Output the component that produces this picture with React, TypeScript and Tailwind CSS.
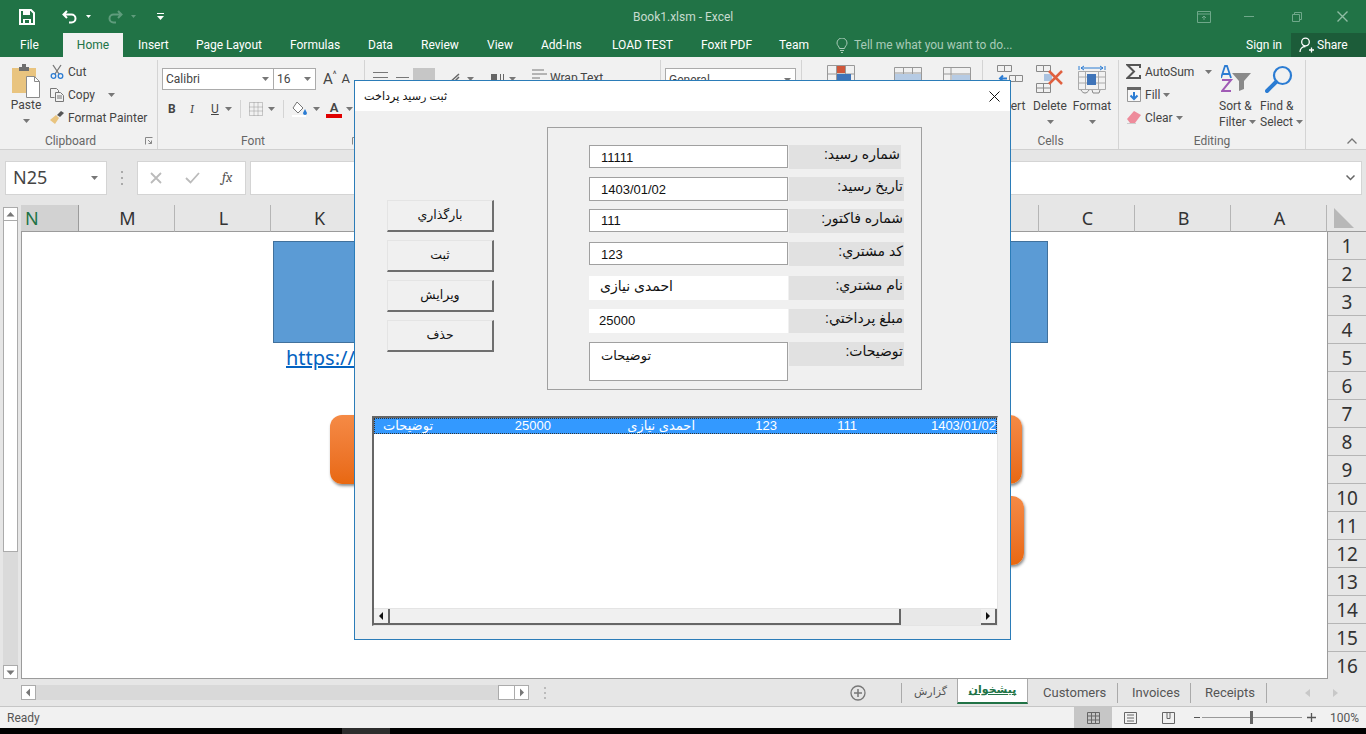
/**
 * Excel window with the payment receipt form open on top of it
 */
import React from "react";

const Caret = ({ className = "" }: { className?: string }) => (
  <svg width="7" height="4" viewBox="0 0 7 4" className={className}>
    <path d="M0 0h7L3.5 4z" fill="#777" />
  </svg>
);

const tabs = [
  { label: "Insert", cls: "ml-[15px] w-[29px]" },
  { label: "Page Layout", cls: "ml-[29px] w-[65px]" },
  { label: "Formulas", cls: "ml-[29px] w-[49px]" },
  { label: "Data", cls: "ml-[29px] w-[24px]" },
  { label: "Review", cls: "ml-[29px] w-[37px]" },
  { label: "View", cls: "ml-[29px] w-[25px]" },
  { label: "Add-Ins", cls: "ml-[29px] w-[42px]" },
  { label: "LOAD TEST", cls: "ml-[29px] w-[60px]" },
  { label: "Foxit PDF", cls: "ml-[29px] w-[50px]" },
  { label: "Team", cls: "ml-[28px] w-[29px]" },
];

/* ---------- title bar and tabs ---------- */
const TitleBar = () => (
  <div className="relative flex h-[33px] items-center bg-[#217346] text-white">
    <svg width="16" height="16" viewBox="0 0 16 16" className="ml-[19px]">
      <path d="M1 1h11l3 3v11H1z" fill="none" stroke="#fff" strokeWidth="2" />
      <path d="M4 2h7v4H4zM4 10h8v5H4z" fill="#fff" />
      <path d="M6 11h4v3H6z" fill="#217346" />
    </svg>
    <svg width="16" height="14" viewBox="0 0 16 14" className="ml-[27px]">
      <path d="M5 1L1.5 4.5 5 8M2 4.5h7.5a4 4 0 0 1 0 8H7" fill="none" stroke="#fff" strokeWidth="2" />
    </svg>
    <svg width="5" height="3" viewBox="0 0 5 3" className="ml-[8px]"><path d="M0 0h5L2.5 3z" fill="#fff" /></svg>
    <svg width="16" height="14" viewBox="0 0 16 14" className="ml-[16px]">
      <path d="M11 1l3.5 3.5L11 8M14 4.5H6.5a4 4 0 0 0 0 8H9" fill="none" stroke="#5f9c7c" strokeWidth="2" />
    </svg>
    <svg width="5" height="3" viewBox="0 0 5 3" className="ml-[8px]"><path d="M0 0h5L2.5 3z" fill="#5f9c7c" /></svg>
    <svg width="7" height="8" viewBox="0 0 7 8" className="ml-[21px]">
      <path d="M0 0h7v1H0zM0 3h7L3.5 7z" fill="#fff" />
    </svg>
    <span className="ml-[469px] mt-[1px] text-[12px] text-[#c7dccf]">Book1.xlsm - Excel</span>
    <div className="ml-auto flex items-center">
      <svg width="14" height="12" viewBox="0 0 14 12">
        <path d="M.5.5h13v11H.5zM.5 3h13M7 9V5M5 7l2-2 2 2" fill="none" stroke="#6fa88a" />
      </svg>
      <div className="ml-[33px] h-[1px] w-[10px] bg-[#6fa88a]" />
      <svg width="10" height="10" viewBox="0 0 10 10" className="ml-[38px]">
        <path d="M.5 2.5h7v7h-7zM2.5 2.5v-2h7v7h-2" fill="none" stroke="#6fa88a" />
      </svg>
      <svg width="11" height="11" viewBox="0 0 11 11" className="ml-[35px] mr-[18px]">
        <path d="M.5.5l10 10M10.5.5l-10 10" stroke="#8fbca3" strokeWidth="1.4" />
      </svg>
    </div>
  </div>
);

const TabBar = () => (
  <div className="flex h-[24px] items-center bg-[#217346] text-[12px] text-white">
    <span className="ml-[20px] w-[18px]">File</span>
    <span className="ml-[25px] flex h-full w-[60px] items-center justify-center bg-[#f1f1f1] text-[#217346]">Home</span>
    {tabs.map((t) => (
      <span key={t.label} className={`whitespace-nowrap ${t.cls}`}>{t.label}</span>
    ))}
    <svg width="12" height="15" viewBox="0 0 12 15" className="ml-[28px]">
      <path d="M3.5 10.5C3 8 1 7.500 1 5a5 5 0 0 1 10 0c0 2.500-2 3-2.500 5.500zM4 12.500h4M5 14.500h2" fill="none" stroke="#a9cbb8" />
    </svg>
    <span className="ml-[6px] text-[#a9cbb8]">Tell me what you want to do...</span>
    <span className="ml-auto">Sign in</span>
    <div className="ml-[9px] flex h-full w-[75px] items-center bg-[#1c5c39]">
      <svg width="15" height="16" viewBox="0 0 15 16" className="ml-[8px]">
        <circle cx="6.500" cy="5" r="3.800" fill="none" stroke="#fff" strokeWidth="1.300" />
        <path d="M1 15c0-3 2-5.500 5.500-5.500M10 13h5M12.500 10.500v5" fill="none" stroke="#fff" strokeWidth="1.300" />
      </svg>
      <span className="ml-[3px]">Share</span>
    </div>
  </div>
);

/* ---------- ribbon ---------- */
const Group = ({ label, className, launcher, children }: { label: string; className: string; launcher?: boolean; children: React.ReactNode }) => (
  <div className={`flex h-[89px] flex-col border-r border-[#d4d4d4] ${className}`}>
    <div className="-mt-[3px] h-[76px] overflow-hidden">{children}</div>
    <div className="flex items-center text-[12px] leading-[16px] text-[#666]">
      <div className="flex-1 text-center">{label}</div>
      {launcher && (
        <div className="flex w-[16px] justify-center">
          <svg width="8" height="8" viewBox="0 0 8 8">
            <path d="M.5 7.500v-7h7M3 3l3.500 3.500M6.500 3.500v3h-3" fill="none" stroke="#888" />
          </svg>
        </div>
      )}
    </div>
  </div>
);

const PasteIcon = () => (
  <svg width="30" height="34" viewBox="0 0 30 34">
    <path d="M1 4h24v25H1z" fill="#e9c47f" />
    <path d="M8 3h3V0h4v3h3v4H8z" fill="#6e6e6e" />
    <path d="M15.500 12.500h8l5 5v16h-13z" fill="#fff" stroke="#8a8a8a" />
    <path d="M23.500 12.500v5h5" fill="none" stroke="#8a8a8a" />
  </svg>
);

const ClipboardGroup = () => (
  <Group label="Clipboard" className="w-[158px]" launcher>
    <div className="flex">
      <div className="ml-[11px] flex w-[30px] flex-col items-center pt-[7px]">
        <PasteIcon />
        <span className="-mt-[1px] text-[12px] leading-[16px] text-[#444]">Paste</span>
        <Caret className="mt-[6px]" />
      </div>
      <div className="ml-[9px] flex flex-col whitespace-nowrap text-[12px] text-[#444]">
        <div className="mt-[3px] flex h-[23px] items-center gap-[4px]">
          <svg width="14" height="15" viewBox="0 0 14 15">
            <path d="M3 1l6 9M11 1L5 10" stroke="#777" strokeWidth="1.300" />
            <circle cx="3.500" cy="12" r="2.300" fill="none" stroke="#2b7cd3" strokeWidth="1.300" />
            <circle cx="10.500" cy="12" r="2.300" fill="none" stroke="#2b7cd3" strokeWidth="1.300" />
          </svg>
          Cut
        </div>
        <div className="flex h-[23px] items-center gap-[4px]">
          <svg width="14" height="14" viewBox="0 0 14 14">
            <path d="M.5.5h6l2 2v2M.5.500v9h4M5.500 4.500h5l3 3v6h-8zM7 8h5M7 10h5" fill="none" stroke="#777" />
          </svg>
          Copy
          <Caret className="ml-[9px]" />
        </div>
        <div className="flex h-[23px] items-center gap-[4px]">
          <svg width="14" height="13" viewBox="0 0 14 13">
            <path d="M0 9l6-5 3 3-4 6z" fill="#e9c47f" />
            <path d="M7 4l4-4 3 2-4 4z" fill="#555" />
          </svg>
          Format Painter
        </div>
      </div>
    </div>
  </Group>
);

const FontGroup = () => (
  <Group label="Font" className="w-[207px]" launcher>
    <div className="pt-[11px] text-[12px] text-[#444]">
      <div className="flex h-[22px] items-center">
        <div className="ml-[4px] flex h-[22px] w-[112px] items-center justify-between border border-[#ababab] bg-white pl-[3px] pr-[4px]">
          Calibri <Caret />
        </div>
        <div className="ml-[-1px] flex h-[22px] w-[43px] items-center justify-between border border-[#ababab] bg-white pl-[3px] pr-[4px]">
          16 <Caret />
        </div>
        <span className="ml-[7px] text-[15px]">A</span>
        <span className="mb-[8px] text-[9px]">^</span>
        <span className="ml-[5px] text-[13px]">A</span>
      </div>
      <div className="mt-[8px] flex h-[22px] items-center">
        <span className="ml-[10px] w-[10px] font-bold">B</span>
        <span className="ml-[12px] w-[8px] font-serif italic">I</span>
        <span className="ml-[13px] w-[10px] underline">U</span>
        <Caret className="ml-[4px]" />
        <div className="ml-[8px] h-[18px] w-[1px] bg-[#d4d4d4]" />
        <svg width="14" height="14" viewBox="0 0 14 14" className="ml-[8px]">
          <path d="M.5.5h13v13H.5zM5 .5v13M9 .5v13M.5 5h13M.5 9h13" fill="none" stroke="#999" strokeDasharray="1 1" />
        </svg>
        <Caret className="ml-[5px]" />
        <div className="ml-[8px] h-[18px] w-[1px] bg-[#d4d4d4]" />
        <svg width="16" height="16" viewBox="0 0 16 16" className="ml-[8px]">
          <path d="M5 1l6 6-5 5-5-5z" fill="#fff" stroke="#777" />
          <path d="M13 8l2 4a2 2 0 0 1-4 0z" fill="#2b7cd3" />
          <path d="M0 14h14v2H0z" fill="#fff" />
        </svg>
        <Caret className="ml-[5px]" />
        <div className="ml-[6px] flex w-[16px] flex-col items-center">
          <span className="text-[13px] font-semibold leading-[13px]">A</span>
          <div className="h-[4px] w-[16px] bg-[#e00000]" />
        </div>
        <Caret className="ml-[4px]" />
      </div>
    </div>
  </Group>
);

/* mostly hidden by the form, only the top edge shows */
const AlignmentGroup = () => (
  <Group label="Alignment" className="w-[296px]">
    <div className="flex pt-[11px]">
      <svg width="15" height="11" viewBox="0 0 15 11" className="ml-[8px] mt-[4px]">
        <path d="M0 .5h15M0 5.500h15M0 10.500h15" stroke="#777" />
      </svg>
      <svg width="13" height="11" viewBox="0 0 13 11" className="ml-[8px] mt-[9px]">
        <path d="M0 .5h13M0 5.500h13" stroke="#777" />
      </svg>
      <div className="ml-[4px] h-[24px] w-[22px] bg-[#c6c6c6]" />
      <svg width="16" height="14" viewBox="0 0 16 14" className="ml-[12px] mt-[3px]">
        <path d="M1 13L12 3M5 13l7-7" stroke="#666" strokeWidth="1.500" fill="none" />
      </svg>
      <Caret className="ml-[4px] mt-[9px]" />
      <svg width="13" height="11" viewBox="0 0 13 11" className="ml-[17px] mt-[6px]">
        <path d="M0 0h6v7H0zM9 0h1v11H9zM12 0h1v11h-1z" fill="#666" />
      </svg>
      <Caret className="ml-[5px] mt-[9px]" />
      <svg width="15" height="14" viewBox="0 0 15 14" className="ml-[16px] mt-[1px]">
        <path d="M0 1h12M0 5h15M0 9h8M0 13h8" stroke="#777" fill="none" />
      </svg>
      <span className="ml-[3px] mt-[2px] text-[12px] leading-[16px] text-[#444]">Wrap Text</span>
    </div>
  </Group>
);

const NumberGroup = () => (
  <Group label="Number" className="w-[141px]">
    <div className="pt-[11px]">
      <div className="ml-[4px] flex h-[24px] w-[131px] items-center justify-between border border-[#ababab] bg-white pl-[3px] pr-[4px] text-[12px] text-[#444]">
        General <Caret />
      </div>
    </div>
  </Group>
);

const StylesGroup = () => (
  <Group label="Styles" className="w-[181px]">
    <div className="flex pt-[8px]">
      <svg width="28" height="28" viewBox="0 0 28 28" className="ml-[25px]">
        <path d="M.5.5h27v27H.5zM.5 9h27M.5 18h27M9.500.5v27M18.500.5v27" fill="none" stroke="#999" />
        <path d="M10 1h8v7h-8z" fill="#d0573a" /><path d="M10 9h14v8H10z" fill="#3f74b8" /><path d="M10 18h8v9h-8z" fill="#d0573a" />
      </svg>
      <svg width="28" height="24" viewBox="0 0 28 24" className="ml-[39px] mt-[2px]">
        <path d="M.5.5h27v23H.5zM.5 6h27M9.500.5v23M18.500.5v23" fill="none" stroke="#999" />
        <path d="M1 7h26v6H1z" fill="#b6cbe4" />
      </svg>
      <svg width="28" height="24" viewBox="0 0 28 24" className="ml-[21px] mt-[2px]">
        <path d="M.5.5h27v23H.5zM8 .5v23M.5 7h27" fill="none" stroke="#999" />
        <path d="M9 8h18v15H9z" fill="#b6cbe4" />
      </svg>
    </div>
  </Group>
);

const CellsGroup = () => (
  <Group label="Cells" className="w-[136px]">
    <div className="flex">
      <div className="ml-[12px] flex w-[30px] flex-col items-center">
        <svg width="26" height="28" viewBox="0 0 26 28" className="mt-[8px]">
          <path d="M.5.5h7v6h-7zM7.500.5h7v6h-7zM12.500 10.500h6v6h-6zM18.500 10.500h7v6h-7z" fill="none" stroke="#888" />
          <path d="M10 13.500H3M6 10.500l-3 3 3 3" stroke="#2b7cd3" strokeWidth="2" fill="none" />
        </svg>
        <span className="mt-[5px] text-[12px] leading-[16px] text-[#444]">Insert</span>
      </div>
      <div className="ml-[8px] flex w-[34px] flex-col items-center">
        <svg width="28" height="28" viewBox="0 0 28 28" className="mt-[8px]">
          <path d="M.5.5h7v6h-7zM7.500.5h7v6h-7zM.5 18.500h14v9H.5zM7.500 18.500v9M.5 23h14" fill="none" stroke="#888" />
          <path d="M8 9h8v7H8z" fill="#a9c2e0" />
          <path d="M13 6l13 13M26 6L13 19" stroke="#e0603f" strokeWidth="2.500" />
        </svg>
        <span className="mt-[5px] text-[12px] leading-[16px] text-[#444]">Delete</span>
        <Caret className="mt-[6px]" />
      </div>
      <div className="ml-[7px] flex w-[36px] flex-col items-center">
        <svg width="28" height="30" viewBox="0 0 28 30" className="mt-[8px]">
          <path d="M1 1v4M27 1v4M3 3h22M3 3l3-2M3 3l3 2M25 3l-3-2M25 3l-3 2" stroke="#2b7cd3" fill="none" />
          <path d="M.5 6.500h27v18H.5zM7.500 6.500v18M20.500 6.500v18M.5 12h27M.5 18h27" fill="none" stroke="#aaa" />
          <path d="M9 9h9v11H9z" fill="#3f74b8" />
          <path d="M3 25c2 4 6 4 8 0M14 25l1 3h6l1-3" fill="none" stroke="#888" />
        </svg>
        <span className="mt-[3px] text-[12px] leading-[16px] text-[#444]">Format</span>
        <Caret className="mt-[6px]" />
      </div>
    </div>
  </Group>
);

const EditingGroup = () => (
  <Group label="Editing" className="w-[187px]">
    <div className="flex text-[12px] text-[#444]">
      <div className="ml-[7px] flex w-[93px] flex-col">
        <div className="mt-[3px] flex h-[23px] items-center">
          <svg width="15" height="15" viewBox="0 0 15 15" className="mr-[4px]">
            <path d="M14 4V1H1.500L8 7.500 1.500 14H14v-3" fill="none" stroke="#555" strokeWidth="2" />
          </svg>
          AutoSum
          <Caret className="ml-[11px]" />
        </div>
        <div className="flex h-[23px] items-center">
          <svg width="14" height="15" viewBox="0 0 14 15" className="ml-[1px] mr-[4px]">
            <path d="M.5.5h13v14H.5z" fill="#f8f8f8" stroke="#999" />
            <path d="M0 0h14v3H0z" fill="#666" />
            <path d="M7 5v7M3.500 8.500L7 12l3.500-3.500" stroke="#2b7cd3" strokeWidth="2" fill="none" />
          </svg>
          Fill
          <Caret className="ml-[3px]" />
        </div>
        <div className="flex h-[23px] items-center">
          <svg width="14" height="13" viewBox="0 0 14 13" className="ml-[1px] mr-[4px]">
            <path d="M0 8l7-8 7 4-6 8H3z" fill="#ee8b9b" />
            <path d="M0 12h9v1H0z" fill="#ccc" />
          </svg>
          Clear
          <Caret className="ml-[3px]" />
        </div>
      </div>
      <div className="flex w-[40px] flex-col items-start">
        <svg width="30" height="28" viewBox="0 0 30 28" className="ml-[2px] mt-[8px]">
          <path d="M0 13L4 1h2l4 12M2 9h6" fill="none" stroke="#2b7cd3" strokeWidth="1.800" />
          <path d="M1 15h9L1 26h9" fill="none" stroke="#a05bb5" strokeWidth="2" />
          <path d="M11 8h19l-7 8v8l-5 2V16z" fill="#8a8a8a" />
        </svg>
        <span className="mt-[5px] whitespace-nowrap leading-[16px]">Sort &amp;</span>
        <span className="flex items-center leading-[16px]">Filter<Caret className="ml-[3px]" /></span>
      </div>
      <div className="ml-[1px] flex w-[40px] flex-col items-start">
        <svg width="28" height="28" viewBox="0 0 28 28" className="ml-[5px] mt-[8px]">
          <circle cx="17.500" cy="10.500" r="8.500" fill="none" stroke="#2b7cd3" strokeWidth="2.200" />
          <path d="M11 17L2 26" stroke="#2b7cd3" strokeWidth="4" strokeLinecap="round" />
        </svg>
        <span className="mt-[5px] whitespace-nowrap leading-[16px]">Find &amp;</span>
        <span className="flex items-center leading-[16px]">Select<Caret className="ml-[3px]" /></span>
      </div>
    </div>
  </Group>
);

const Ribbon = () => (
  <div className="relative flex h-[93px] items-start border-b border-[#d0d0d0] bg-[#f1f1f1] pt-[3px]">
    <ClipboardGroup />
    <FontGroup />
    <AlignmentGroup />
    <NumberGroup />
    <StylesGroup />
    <CellsGroup />
    <EditingGroup />
    <svg width="10" height="6" viewBox="0 0 10 6" className="ml-[41px] mt-[78px]">
      <path d="M.5 5.500L5 1l4.500 4.500" fill="none" stroke="#777" strokeWidth="1.300" />
    </svg>
  </div>
);

const FormulaBar = () => (
  <div className="flex h-[55px] items-center bg-[#e6e6e6] font-['Noto_Sans',sans-serif]">
    <div className="ml-[5px] flex h-[34px] w-[102px] items-center justify-between border border-[#d4d4d4] bg-white pl-[7px] pr-[8px] text-[18px] text-[#444]">
      N25 <Caret />
    </div>
    <div className="ml-[14px] flex h-[14px] w-[2px] flex-col justify-between">
      <div className="h-[2px] bg-[#aaa]" /><div className="h-[2px] bg-[#aaa]" /><div className="h-[2px] bg-[#aaa]" />
    </div>
    <div className="ml-[14px] flex h-[34px] w-[109px] items-center border border-[#d4d4d4] bg-white">
      <svg width="12" height="12" viewBox="0 0 12 12" className="ml-[12px]">
        <path d="M1 1l10 10M11 1L1 11" stroke="#bbb" strokeWidth="1.800" />
      </svg>
      <svg width="15" height="12" viewBox="0 0 15 12" className="ml-[23px]">
        <path d="M1 6l4.500 4.500L14 1" fill="none" stroke="#bbb" strokeWidth="1.800" />
      </svg>
      <span className="ml-[22px] font-serif text-[14px] italic text-[#555]">fx</span>
    </div>
    <div className="ml-[4px] mr-[4px] flex h-[34px] flex-1 items-center justify-end border border-[#d4d4d4] bg-white pr-[6px]">
      <svg width="9" height="6" viewBox="0 0 9 6"><path d="M.5.5L4.500 4.500 8.500.5" fill="none" stroke="#666" strokeWidth="1.500" /></svg>
    </div>
  </div>
);

/* ---------- sheet ---------- */
const columns = ["M", "L", "K", "J", "I", "H", "G", "F", "E", "D", "C", "B", "A"];
const rows = Array.from({ length: 16 }, (_, i) => i + 1);

const ArrowBox = ({ d, className = "" }: { d: string; className?: string }) => (
  <div className={`flex items-center justify-center border border-[#ababab] bg-white ${className}`}>
    <svg width="9" height="9" viewBox="0 0 9 9"><path d={d} fill="#777" /></svg>
  </div>
);

const SheetArea = () => (
  <div className="flex h-[474px] bg-[#e6e6e6] font-['Noto_Sans',sans-serif]">
    <div className="flex w-[21px] flex-col pl-[3px] pt-[2px]">
      <ArrowBox d="M4.500 2L8.500 6.500H.5z" className="h-[14px] w-[15px]" />
      <div className="h-[331px] w-[15px] border border-t-0 border-[#ababab] bg-white" />
      <div className="h-[113px] w-[15px] bg-[#dadada]" />
      <ArrowBox d="M.5 2.500h8L4.500 7z" className="h-[14px] w-[15px]" />
    </div>
    <div className="flex w-[1306px] flex-col">
      <div className="flex h-[27px] text-[18px] leading-[26px] text-[#333]">
        <div className="w-[58px] border-b border-r border-[#9b9b9b] bg-[#d2d2d2] pl-[4px] text-[#217346]">N</div>
        {columns.map((c) => (
          <div key={c} className="w-[96px] border-b border-r border-[#b5b5b5] border-b-[#9b9b9b] pl-[2px] text-center">{c}</div>
        ))}
      </div>
      <div className="relative h-[447px] overflow-hidden border-b border-l border-[#9b9b9b] bg-white">
        <div className="absolute left-[251px] top-[9px] h-[102px] w-[775px] border border-[#41719c] bg-[#5b9bd5]" />
        <span className="absolute left-[264px] top-[111px] text-[20px] text-[#0563c1] underline">https://</span>
        <div className="absolute left-[308px] top-[183px] h-[69px] w-[692px] rounded-[12px] bg-gradient-to-b from-[#f58a45] to-[#e8680f] shadow-[1px_2px_3px_rgba(0,0,0,0.45)]" />
        <div className="absolute left-[360px] top-[264px] h-[69px] w-[642px] rounded-[12px] bg-gradient-to-b from-[#f58a45] to-[#e8680f] shadow-[1px_2px_3px_rgba(0,0,0,0.45)]" />
      </div>
    </div>
    <div className="w-[39px]">
      <div className="flex h-[27px] items-center justify-center border-b border-[#9b9b9b]">
        <svg width="20" height="20" viewBox="0 0 20 20" className="ml-[-6px]"><path d="M20 20H0V0z" fill="#b8b8b8" /></svg>
      </div>
      <div className="h-[447px] overflow-hidden border-l border-[#9b9b9b]">
        {rows.map((r) => (
          <div key={r} className="h-[28px] border-b border-[#b5b5b5] text-center text-[19px] leading-[29px] text-[#333]">{r}</div>
        ))}
      </div>
    </div>
  </div>
);

const SheetTabs = () => (
  <div className="flex h-[27px] items-center bg-[#e6e6e6] text-[13px] text-[#555]">
    <ArrowBox d="M6 .5v8L2 4.500z" className="ml-[21px] h-[15px] w-[15px]" />
    <div className="h-[15px] w-[462px] bg-[#d9d9d9]" />
    <div className="h-[15px] w-[17px] border border-[#ababab] bg-white" />
    <ArrowBox d="M3 .5v8l4-4z" className="ml-[-1px] h-[15px] w-[15px]" />
    <div className="ml-[15px] flex h-[12px] w-[2px] flex-col justify-between">
      <div className="h-[2px] bg-[#bbb]" /><div className="h-[2px] bg-[#bbb]" /><div className="h-[2px] bg-[#bbb]" />
    </div>
    <svg width="16" height="16" viewBox="0 0 16 16" className="ml-[304px]">
      <circle cx="8" cy="8" r="7" fill="none" stroke="#777" strokeWidth="1.300" />
      <path d="M8 4v8M4 8h8" stroke="#777" strokeWidth="1.500" />
    </svg>
    <div className="ml-[35px] h-[20px] w-[1px] bg-[#aaa]" />
    <span dir="rtl" className="ml-[12px] w-[33px] font-['DejaVu_Sans',sans-serif] text-[11px]">گزارش</span>
    <div className="ml-[10px] flex h-[25px] w-[71px] items-center justify-center self-start border-x border-b-2 border-[#aaa] border-b-[#217346] bg-white font-['DejaVu_Sans',sans-serif] text-[11px] font-bold text-[#217346] underline" dir="rtl">
      پیشخوان
    </div>
    <span className="ml-[15px] w-[62px] whitespace-nowrap">Customers</span>
    <div className="ml-[12px] h-[20px] w-[1px] bg-[#aaa]" />
    <span className="ml-[14px] w-[46px] whitespace-nowrap">Invoices</span>
    <div className="ml-[12px] h-[20px] w-[1px] bg-[#aaa]" />
    <span className="ml-[14px] w-[49px] whitespace-nowrap">Receipts</span>
    <div className="ml-[12px] h-[20px] w-[1px] bg-[#aaa]" />
    <svg width="5" height="8" viewBox="0 0 5 8" className="ml-[38px]"><path d="M5 0v8L0 4z" fill="#c8c8c8" /></svg>
    <svg width="5" height="8" viewBox="0 0 5 8" className="ml-[23px]"><path d="M0 0v8l5-4z" fill="#c8c8c8" /></svg>
  </div>
);

const StatusBar = () => (
  <div className="flex h-[22px] items-center border-t border-[#c6c6c6] bg-[#f1f1f1] text-[12px] text-[#555]">
    <span className="ml-[7px] w-[31px]">Ready</span>
    <div className="ml-[1036px] flex h-full w-[38px] items-center justify-center bg-[#c6c6c6]">
      <svg width="13" height="12" viewBox="0 0 13 12"><path d="M.5.5h12v11H.5zM4.500.5v11M8.500.5v11M.5 4h12M.5 8h12" fill="none" stroke="#666" /></svg>
    </div>
    <svg width="13" height="12" viewBox="0 0 13 12" className="ml-[12px]"><path d="M.5.5h12v11H.5zM3 3h7M3 6h7M3 9h7" fill="none" stroke="#666" /></svg>
    <svg width="13" height="12" viewBox="0 0 13 12" className="ml-[25px]"><path d="M.5.5h12v11H.5zM5 .5v6h3v-6" fill="none" stroke="#666" /></svg>
    <div className="ml-[19px] h-[1px] w-[6px] bg-[#555]" />
    <div className="relative ml-[2px] h-[1px] w-[100px] bg-[#999]">
      <div className="absolute left-[48px] top-[-6px] h-[13px] w-[3px] bg-[#666]" />
    </div>
    <svg width="9" height="9" viewBox="0 0 9 9" className="ml-[5px]"><path d="M4.500 0v9M0 4.500h9" stroke="#555" strokeWidth="1.300" /></svg>
    <span className="ml-[14px]">100%</span>
  </div>
);

/* ---------- the form ---------- */
const formRows = [
  { label: "شماره رسيد:", value: "11111", cls: "mt-[17px]", inputCls: "h-[23px] border border-[#a0a0a0] pl-[11px] pt-[2px]", labelCls: "w-[112px]" },
  { label: "تاريخ رسيد:", value: "1403/01/02", cls: "mt-[8px]", inputCls: "h-[24px] border border-[#a0a0a0] pl-[11px] pt-[1px]", labelCls: "w-[115px]" },
  { label: "شماره فاكتور:", value: "111", cls: "mt-[8px]", inputCls: "h-[23px] border border-[#a0a0a0] pl-[11px] pt-[1px]", labelCls: "w-[115px]" },
  { label: "كد مشتري:", value: "123", cls: "mt-[9px]", inputCls: "h-[23px] border border-[#a0a0a0] pl-[11px] pt-[2px]", labelCls: "w-[115px]" },
  { label: "نام مشتري:", value: "احمدی نیازی", cls: "mt-[10px]", inputCls: "h-[24px] pb-[4px] pl-[11px] text-[14px]", labelCls: "w-[115px]" },
  { label: "مبلغ پرداختي:", value: "25000", cls: "mt-[9px]", inputCls: "h-[24px] pl-[10px]", labelCls: "w-[115px]" },
];

const buttons = ["بارگذاري", "ثبت", "ويرايش", "حذف"];

const listCells = [
  { text: "توضيحات", cls: "w-[59px]" },
  { text: "25000", cls: "w-[118px]" },
  { text: "احمدی نیازی", cls: "w-[144px]" },
  { text: "123", cls: "w-[82px]" },
  { text: "111", cls: "w-[80px]" },
  { text: "1403/01/02", cls: "w-[139px]" },
];

const FormLabel = ({ text, className = "w-[115px]" }: { text: string; className?: string }) => (
  <div dir="rtl" className={`ml-[1px] h-[24px] whitespace-nowrap bg-[#e1e1e1] pr-[1px] text-[14px] leading-[18px] ${className}`}>{text}</div>
);

const ReceiptForm = () => (
  <div className="absolute left-[354px] top-[80px] flex h-[560px] w-[657px] flex-col border border-[#2b7cb8] bg-[#f0f0f0] font-['Liberation_Sans','DejaVu_Sans',sans-serif] text-[13px] text-[#111]">
    <div className="flex h-[30px] shrink-0 items-center justify-between bg-white pl-[9px] pr-[10px]">
      <span dir="rtl" className="text-[11.2px]">ثبت رسيد پرداخت</span>
      <svg width="11" height="11" viewBox="0 0 11 11"><path d="M.5.5l10 10M10.500.5l-10 10" stroke="#111" /></svg>
    </div>
    <div className="flex">
      <div className="ml-[32px] mt-[89px] flex w-[107px] flex-col gap-[8px]">
        {buttons.map((b) => (
          <div key={b} dir="rtl" className="flex h-[32px] items-center justify-center border border-b-2 border-r-2 border-[#e4e4e4] border-b-[#6f6f6f] border-r-[#6f6f6f] bg-[#f0f0f0] text-[12.5px]">{b}</div>
        ))}
      </div>
      <div className="ml-[53px] mt-[16px] flex h-[263px] w-[375px] flex-col border border-[#a0a0a0] pl-[41px]">
        {formRows.map((r) => (
          <div key={r.label} className={`flex h-[24px] items-start ${r.cls}`}>
            <div className={`flex w-[199px] items-center bg-white ${r.inputCls}`}>
              <span>{r.value}</span>
            </div>
            <FormLabel text={r.label} className={r.labelCls} />
          </div>
        ))}
        <div className="mt-[9px] flex items-start">
          <div dir="rtl" className="h-[39px] w-[199px] border border-[#a0a0a0] bg-white pr-[136px] pt-[3px] text-[13px]">توضيحات</div>
          <FormLabel text="توضيحات:" />
        </div>
      </div>
    </div>
    <div className="ml-[17px] mt-[26px] flex h-[210px] w-[626px] flex-col border-b border-l-2 border-r border-t-2 border-[#666] border-b-[#e4e4e4] border-r-[#e4e4e4] bg-white">
      <div className="flex h-[16px] shrink-0 items-center bg-[#3399ff] text-[13px] leading-[14px] text-white outline-1 -outline-offset-1 outline-[#333] outline-dotted">
        {listCells.map((c) => (
          <span key={c.text} dir="ltr" className={`${c.cls} whitespace-nowrap text-right`}>{c.text}</span>
        ))}
      </div>
      <div className="flex-1" />
      <div className="flex h-[17px] items-stretch border-t border-[#e4e4e4]">
        <div className="flex w-[16px] items-center justify-center border-b-2 border-r-2 border-[#666] bg-[#f0f0f0]">
          <svg width="4" height="8" viewBox="0 0 4 8"><path d="M4 0v8L0 4z" fill="#111" /></svg>
        </div>
        <div className="w-[511px] border-b-2 border-r-2 border-[#666] bg-[#f0f0f0]" />
        <div className="flex-1 bg-[#e8e8e8]" />
        <div className="flex w-[16px] items-center justify-center border-b-2 border-r-2 border-[#666] bg-[#f0f0f0]">
          <svg width="4" height="8" viewBox="0 0 4 8"><path d="M0 0v8l4-4z" fill="#111" /></svg>
        </div>
      </div>
    </div>
  </div>
);

export default function App() {
  return (
    <div className="relative h-[734px] w-[1366px] overflow-hidden bg-[#e6e6e6] font-['Roboto',sans-serif]">
      <TitleBar />
      <TabBar />
      <Ribbon />
      <FormulaBar />
      <SheetArea />
      <SheetTabs />
      <StatusBar />
      <div className="flex h-[6px] bg-black">
        <div className="ml-[342px] w-[48px] bg-[#2d2d2d]" />
      </div>
      <ReceiptForm />
    </div>
  );
}
